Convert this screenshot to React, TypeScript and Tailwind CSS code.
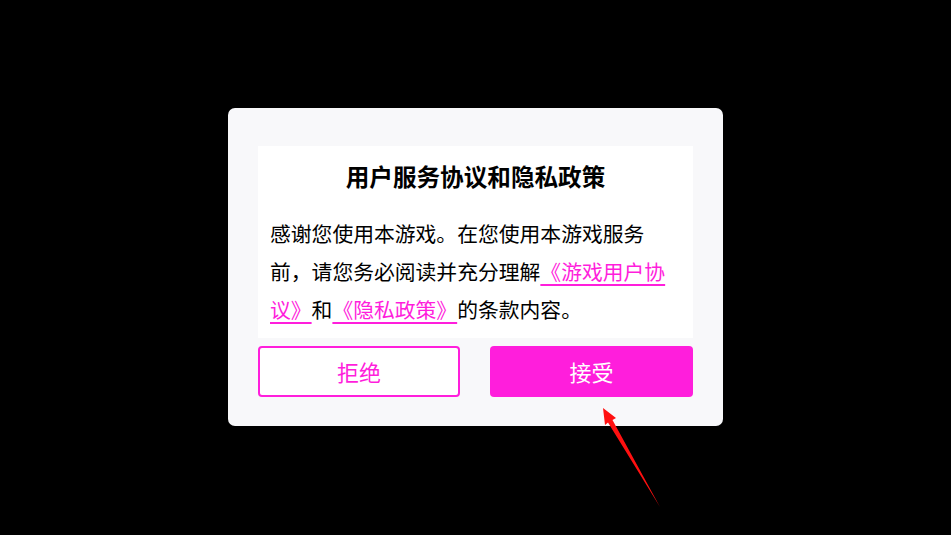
import React from "react";

export default function App() {
  return (
    <div
      className="relative w-[951px] h-[535px] bg-black flex justify-center overflow-hidden"
      style={{ fontFamily: '"Noto Sans CJK SC", "Noto Sans", sans-serif' }}
    >
      <div className="mt-[108px] w-[495px] h-[318px] bg-[#f8f8fa] rounded-[7px] px-[30px] pt-[38px] flex flex-col">
        <div className="bg-white px-[12px] pt-[14px] pb-[10px]">
          <div className="text-center text-[23.6px] leading-[32px] font-bold text-black">
            用户服务协议和隐私政策
          </div>
          <p className="mt-[22px] text-[20.8px] leading-[38px] text-black">
            感谢您使用本游戏。在您使用本游戏服务前，请您务必阅读并充分理解
            <span className="text-[#ff1edc] underline decoration-[2px] underline-offset-[4px]">《游戏用户协议》</span>
            和
            <span className="text-[#ff1edc] underline decoration-[2px] underline-offset-[4px]">《隐私政策》</span>
            的条款内容。
          </p>
        </div>
        <div className="mt-[8px] flex gap-[30px]">
          <button className="w-[202px] h-[51px] rounded-[4px] border-2 border-[#ff1edc] bg-white text-[#ff1edc] text-[22px] flex items-center justify-center">
            拒绝
          </button>
          <button className="w-[203px] h-[51px] rounded-[4px] bg-[#ff1edc] text-white text-[22px] flex items-center justify-center">
            接受
          </button>
        </div>
      </div>
      <svg className="absolute left-0 top-0" width="951" height="535" viewBox="0 0 951 535">
        <polygon
          points="603,408 616,418 612.5,420 660,507 608,422.5 605,425"
          fill="#ff1010"
        />
      </svg>
    </div>
  );
}
